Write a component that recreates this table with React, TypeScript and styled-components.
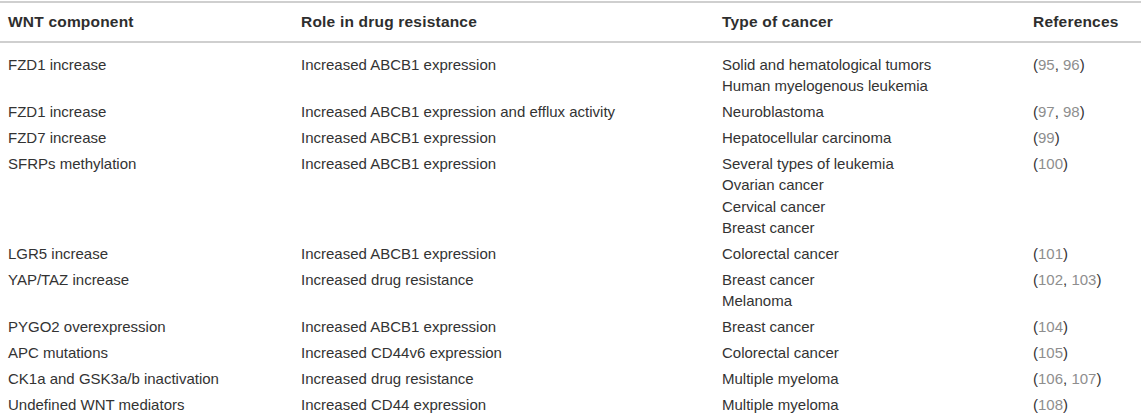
import React from "react";
import styled, { createGlobalStyle } from "styled-components";

const Global = createGlobalStyle`
  html, body { margin: 0; padding: 0; background: #ffffff; }
  body { font-family: "Liberation Sans", Arial, Helvetica, sans-serif; }
  *, *::before, *::after { box-sizing: border-box; }
`;

const Table = styled.table`
  width: 1141px;
  margin-top: 1px;
  border-collapse: collapse;
  table-layout: fixed;
  font-family: "Liberation Sans", Arial, Helvetica, sans-serif;
  font-size: 15px;
  line-height: 21.5px;
  color: #333333;
  border-top: 2px solid #cfcfcf;
`;

const Col = styled.col<{ $w: number }>`
  width: ${(p) => p.$w}px;
`;

const HeadRow = styled.tr`
  border-bottom: 2px solid #cfcfcf;
`;

const HeadCell = styled.th`
  text-align: left;
  font-weight: 700;
  font-size: 15.5px;
  letter-spacing: 0.2px;
  color: #2e2e2e;
  padding: 8px 8px 8px;
  vertical-align: top;
  white-space: nowrap;
`;

const Row = styled.tr<{ $first?: boolean }>`
  & > td {
    padding-top: ${(p) => (p.$first ? "11px" : "2.2px")};
  }
`;

const Cell = styled.td`
  padding: 2.2px 8px;
  vertical-align: top;
  text-align: left;
  white-space: nowrap;
`;

const Line = styled.div`
  white-space: nowrap;
`;

const RefLink = styled.span`
  color: #8e8e8e;
`;

type Entry = {
  comp: string;
  role: string;
  cancers: string[];
  refs: string[];
};

const data: Entry[] = [
  { comp: "FZD1 increase", role: "Increased ABCB1 expression", cancers: ["Solid and hematological tumors", "Human myelogenous leukemia"], refs: ["95", "96"] },
  { comp: "FZD1 increase", role: "Increased ABCB1 expression and efflux activity", cancers: ["Neuroblastoma"], refs: ["97", "98"] },
  { comp: "FZD7 increase", role: "Increased ABCB1 expression", cancers: ["Hepatocellular carcinoma"], refs: ["99"] },
  { comp: "SFRPs methylation", role: "Increased ABCB1 expression", cancers: ["Several types of leukemia", "Ovarian cancer", "Cervical cancer", "Breast cancer"], refs: ["100"] },
  { comp: "LGR5 increase", role: "Increased ABCB1 expression", cancers: ["Colorectal cancer"], refs: ["101"] },
  { comp: "YAP/TAZ increase", role: "Increased drug resistance", cancers: ["Breast cancer", "Melanoma"], refs: ["102", "103"] },
  { comp: "PYGO2 overexpression", role: "Increased ABCB1 expression", cancers: ["Breast cancer"], refs: ["104"] },
  { comp: "APC mutations", role: "Increased CD44v6 expression", cancers: ["Colorectal cancer"], refs: ["105"] },
  { comp: "CK1a and GSK3a/b inactivation", role: "Increased drug resistance", cancers: ["Multiple myeloma"], refs: ["106", "107"] },
  { comp: "Undefined WNT mediators", role: "Increased CD44 expression", cancers: ["Multiple myeloma"], refs: ["108"] },
];

function Refs({ refs }: { refs: string[] }) {
  return (
    <span>
      (
      {refs.map((r, i) => (
        <React.Fragment key={r}>
          {i > 0 ? ", " : ""}
          <RefLink>{r}</RefLink>
        </React.Fragment>
      ))}
      )
    </span>
  );
}

export default function App() {
  return (
    <>
      <Global />
      <Table>
        <colgroup>
          <Col $w={293} />
          <Col $w={421} />
          <Col $w={311} />
          <Col $w={116} />
        </colgroup>
        <thead>
          <HeadRow>
            <HeadCell>WNT component</HeadCell>
            <HeadCell>Role in drug resistance</HeadCell>
            <HeadCell>Type of cancer</HeadCell>
            <HeadCell>References</HeadCell>
          </HeadRow>
        </thead>
        <tbody>
          {data.map((d, i) => (
            <Row key={i} $first={i === 0}>
              <Cell>{d.comp}</Cell>
              <Cell>{d.role}</Cell>
              <Cell>
                {d.cancers.map((c) => (
                  <Line key={c}>{c}</Line>
                ))}
              </Cell>
              <Cell>
                <Refs refs={d.refs} />
              </Cell>
            </Row>
          ))}
        </tbody>
      </Table>
    </>
  );
}
